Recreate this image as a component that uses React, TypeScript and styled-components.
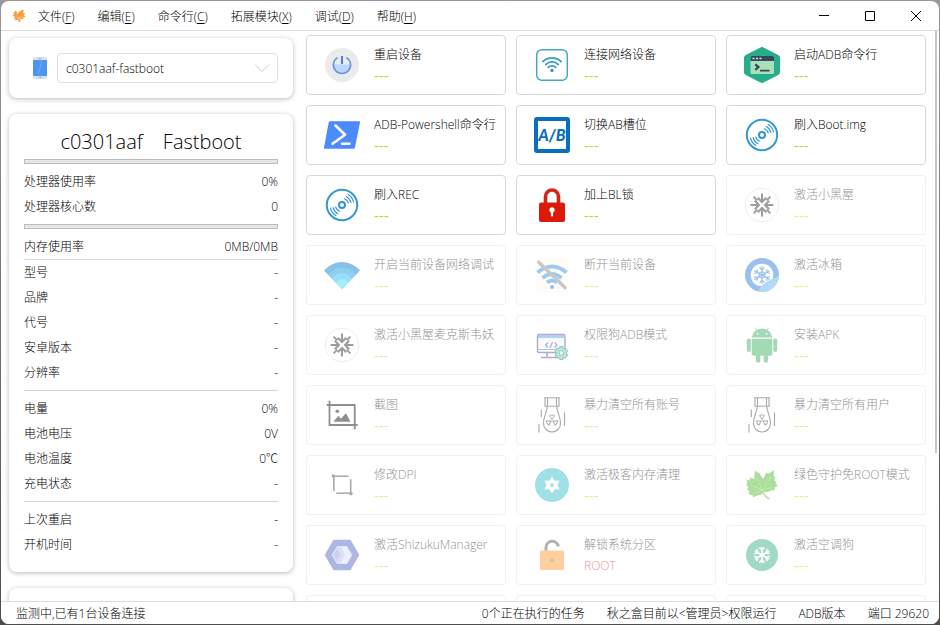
import React from "react";
import styled, { createGlobalStyle, css } from "styled-components";

const GlobalStyle = createGlobalStyle`
  * { box-sizing: border-box; }
  html, body { margin: 0; height: 100%; }
  body {
    font-family: "Open Sans", "Noto Sans CJK SC", sans-serif;
    font-size: 12px;
    font-weight: 300;
    color: #000;
    background: linear-gradient(#98989c, #4c4c52);
  }
  button, select { font: inherit; color: inherit; }
`;

const Window = styled.div`
  display: flex;
  flex-direction: column;
  height: 100vh;
  border: 1px solid transparent;
  border-radius: 9px;
  background: #fff padding-box;
  overflow: hidden;
`;

const TitleBar = styled.header`
  display: flex;
  flex: none;
  align-items: center;
  justify-content: space-between;
  height: 30px;
  padding-left: 10px;
  border-bottom: 1px solid #dadbde;
`;

const MenuBar = styled.nav`
  display: flex;
  align-items: center;
  gap: 1px;

  > svg { margin-right: -1px; }
`;

const MenuItem = styled.button`
  height: 29px;
  padding: 0 11px;
  border: 0;
  background: none;
  white-space: nowrap;

  u { text-underline-offset: 2px; }
`;

const WindowControls = styled.div`
  display: flex;
`;

const WindowButton = styled.button`
  display: grid;
  place-items: center;
  width: 46px;
  height: 29px;
  padding: 0;
  border: 0;
  background: none;
`;

const Main = styled.main`
  display: grid;
  grid-template-columns: 284px minmax(0, 1fr) 3px;
  flex: 1;
  min-height: 0;
  padding: 0 1px 0 8px;
`;

const Sidebar = styled.aside`
  display: flex;
  flex-direction: column;
  gap: 16px;
  padding-top: 7px;
  min-height: 0;
`;

const Card = styled.section`
  flex: none;
  padding: 15px;
  border-radius: 8px;
  background: #fff;
  box-shadow: 0 1px 5px rgba(0, 0, 0, 0.28);
`;

const DevicePicker = styled(Card)`
  display: flex;
  align-items: center;
  gap: 9px;
  padding-left: 23px;
`;

const SelectBox = styled.div`
  display: grid;
  flex: 1;
  align-items: center;

  > * { grid-area: 1 / 1; }
  > svg { justify-self: end; margin-right: 8px; pointer-events: none; }
`;

const DeviceSelect = styled.select`
  width: 100%;
  height: 30px;
  padding: 0 8px;
  border: 1px solid #dcdfe3;
  border-radius: 4px;
  background: #fff;
  appearance: none;
`;

const DeviceTitle = styled.h1`
  display: flex;
  justify-content: center;
  gap: 20px;
  margin: 0 0 5px;
  font-size: 20px;
  line-height: 25px;
  font-weight: 300;
`;

const Meter = styled.div`
  height: 5px;
  border: 1px solid #bcbcbc;
  background: #e6e6e6;
`;

const Stats = styled.dl<{ $flushTop?: boolean; $flushBottom?: boolean }>`
  margin: 0;
  padding-top: ${(p) => (p.$flushTop ? 0 : 5)}px;
  padding-bottom: ${(p) => (p.$flushBottom ? 0 : 5)}px;
`;

const Rule = styled.hr`
  height: 1px;
  margin: 0;
  border: 0;
  background: #d6d6d6;
`;

const Stat = styled.div`
  display: flex;
  justify-content: space-between;
  line-height: 25px;

  dt, dd { margin: 0; }
`;

const Actions = styled.div`
  display: grid;
  grid-template-columns: repeat(auto-fill, minmax(190px, 1fr));
  grid-auto-rows: 60px;
  gap: 10px;
  min-height: 0;
  padding: 4px 9px 0 13px;
  overflow: hidden;
`;

const TileText = styled.span`
  display: flex;
  flex-direction: column;
  line-height: 21px;
`;

const Tile = styled.button`
  display: flex;
  align-items: center;
  gap: 14px;
  min-width: 0;
  padding: 0 0 0 17px;
  border: 1px solid #d5d8da;
  border-radius: 4px;
  background: #fff;
  text-align: left;
  white-space: nowrap;

  > svg { flex: none; }

  &:disabled {
    color: #000;
    border-color: #f0f1f1;
  }
  &:disabled > svg { opacity: 0.5; }
  &:disabled > ${TileText} { opacity: 0.45; }
`;

const Note = styled.span<{ $alert?: boolean }>`
  ${(p) =>
    p.$alert
      ? css`color: #e00018;`
      : css`color: #a4e428; font-size: 15px; font-weight: 400;`}
`;

const ScrollTrack = styled.div`
  min-height: 0;
`;

const ScrollThumb = styled.div`
  width: 2px;
  height: 74%;
  background: #c4c6c8;
`;

const StatusBar = styled.footer`
  display: flex;
  flex: none;
  justify-content: space-between;
  height: 23px;
  padding: 0 10px 0 15px;
  border-top: 1px solid #dadbde;
  background: #fff;
  line-height: 23px;
  white-space: nowrap;
`;

const StatusGroup = styled.div`
  display: flex;
  gap: 22px;
`;

const Icon = ({ children }: { children: React.ReactNode }) => (
  <svg width="36" height="36" viewBox="0 0 36 36" fill="none" aria-hidden="true">
    {children}
  </svg>
);

const Logo = () => (
  <svg width="16" height="16" viewBox="0 0 16 16" aria-hidden="true">
    <path
      d="M3.500 2.500 5.600 3.600 6.800 6.600 8.200 3 9.200 3.800 11 2 12.600 1.800 12 5 14.200 5.200 12.600 7.600 14.600 8.600 12 9.800 12.400 11 9.200 10.800 9.600 13.400 8 14.600 7.400 11.400 4 12.600 4.600 10.800 2.400 10.400 4 9 1.400 7.400 3.400 6.800 1.800 4 4.200 4.800Z"
      fill="#f8983a"
    />
    <path d="m5 5.500 3 5 3.500-5M4.500 9.200l3.500 1.300 4-1.700" stroke="#fcc489" strokeWidth="0.700" fill="none" />
  </svg>
);

const PhoneIcon = () => (
  <svg width="16" height="24" viewBox="0 0 16 24" aria-hidden="true">
    <rect x="1" y="1" width="14" height="22" rx="1" fill="#d9e5f3" />
    <rect x="1" y="4" width="14" height="16" fill="#4f94ef" />
    <path d="M9.500 5 5.500 18h1L10.500 5Z" fill="#76acf4" />
    <path d="M6 2.500h4M6 21.500h4" stroke="#9bb8dc" />
  </svg>
);

const PowerIcon = () => (
  <Icon>
    <circle cx="18" cy="18" r="17" fill="#ebebec" />
    <path d="M9.500 17.500a8.500 8.500 0 0 0 17 0Z" fill="#bbd6fc" />
    <path d="M13.500 10.600a8.600 8.600 0 1 0 9 0" stroke="#6694e2" strokeWidth="1.600" />
    <path d="M18 9v8" stroke="#4d80d8" strokeWidth="2" />
  </Icon>
);

const WifiBoxIcon = () => (
  <Icon>
    <rect x="2.700" y="2.700" width="30.600" height="30.600" rx="5" stroke="#48a4c8" strokeWidth="1.500" />
    <g stroke="#359cc4" strokeWidth="1.700" strokeLinecap="round">
      <path d="M8.800 14.600a13 13 0 0 1 18.400 0" />
      <path d="M11.600 17.600a9 9 0 0 1 12.800 0" />
      <path d="M14.300 20.400a5.300 5.300 0 0 1 7.400 0" />
    </g>
    <circle cx="18" cy="23.500" r="1.700" fill="#359cc4" />
  </Icon>
);

const TerminalIcon = () => (
  <Icon>
    <path d="M16.500.500q1.500-.8 3 0L34.300 8Q36 9 36 10.800V25.200Q36 27 34.300 28L19.500 35.500q-1.500.8-3 0L1.700 28Q0 27 0 25.200V10.800Q0 9 1.700 8Z" fill="#25ad8c" />
    <rect x="6.500" y="9" width="23.500" height="18" rx="1.500" fill="#a9e0ba" />
    <path d="M6.500 14v-3.500Q6.500 9 8 9h20.500Q30 9 30 10.500V14Z" fill="#37475c" />
    <path d="M8.500 11.500h2M12 11.500h2M15.500 11.500h2" stroke="#d7e8e6" strokeWidth="1.500" />
    <path d="m11.300 17.300 3.200 2.800-3.200 2.800" stroke="#37475c" strokeWidth="2.200" />
    <path d="M16 23.700h9.500" stroke="#37475c" strokeWidth="1.800" />
  </Icon>
);

const PowershellIcon = () => (
  <Icon>
    <path d="M6 4.300H35q1.300 0 1 1.300L31 30.500q-.3 1.300-1.500 1.300H1q-1.300 0-1-1.300L4.700 5.600Q5 4.300 6 4.300Z" fill="#4b8bfd" />
    <path d="M11.500 8.500 21 17.800 8.500 26.800" stroke="#fff" strokeWidth="2.600" strokeLinecap="round" strokeLinejoin="round" />
    <path d="M18 26.700h7.500" stroke="#fff" strokeWidth="2.400" strokeLinecap="round" />
  </Icon>
);

const SlotIcon = () => (
  <Icon>
    <rect x="2" y="2" width="32" height="32" rx="1" fill="#fff" stroke="#0b6fc0" strokeWidth="4" />
    <text x="18" y="23.500" textAnchor="middle" fontFamily="Lato" fontSize="16" fontWeight="900" fontStyle="italic" fill="#0b6fc0">
      A/B
    </text>
  </Icon>
);

const DiscIcon = () => (
  <Icon>
    <circle cx="18" cy="18" r="15.200" stroke="#3698d3" strokeWidth="2" />
    <circle cx="18" cy="18" r="3" stroke="#2f94d0" strokeWidth="2" />
    <g stroke="#3698d3" strokeWidth="1.200" strokeLinecap="round">
      <path d="M20.500 11.800a6.700 6.700 0 0 1 3.800 4" />
      <path d="M22.300 9.400a9.500 9.500 0 0 1 4.600 6" />
      <path d="M24.200 7.500a12 12 0 0 1 5.300 7.300" />
      <path d="M15.500 24.200a6.700 6.700 0 0 1-3.800-4" />
      <path d="M13.700 26.600a9.500 9.500 0 0 1-4.600-6" />
      <path d="M11.800 28.500a12 12 0 0 1-5.300-7.300" />
    </g>
  </Icon>
);

const LockIcon = () => (
  <Icon>
    <path d="M11.500 17V9.500a6.500 6.500 0 0 1 13 0V17" stroke="#d32417" strokeWidth="3.600" />
    <rect x="5" y="15.500" width="26" height="19.500" rx="2" fill="#dc1a09" />
    <circle cx="18" cy="22.800" r="2.600" fill="#fff" />
    <path d="M18 23v5.500" stroke="#fff" strokeWidth="2.200" strokeLinecap="round" />
  </Icon>
);

const InwardIcon = () => (
  <Icon>
    <circle cx="18" cy="18" r="16.700" stroke="#dedede" strokeWidth="1" />
    <g stroke="#3c3c3c" strokeWidth="2">
      {[0, 90, 180, 270].map((a) => (
        <g key={a} transform={`rotate(${a} 18 18)`}>
          <path d="M18 6.500v8M13.800 10.800l4.200 4.200 4.200-4.200" />
          <path d="m9.600 9.600 3.800 3.800" />
        </g>
      ))}
    </g>
  </Icon>
);

const FanIcon = () => (
  <Icon>
    <path d="M0 13.500Q8 5 18 5t18 8.500L18 31.700Z" fill="#1283d4" />
    <path d="M4 17.500Q10 10.500 18 10.500t14 7L18 31.700Z" fill="#20a0e4" />
    <path d="M8 21.500Q12.500 16 18 16t10 5.500L18 31.700Z" fill="#2fc0f2" />
    <path d="M12 25.600Q15 22 18 22t6 3.600l-6 6.100Z" fill="#48e0fc" />
  </Icon>
);

const WifiOffIcon = () => (
  <Icon>
    <rect x="2" y="1" width="32" height="34" fill="#fffaf3" />
    <g stroke="#3f97de" strokeWidth="4">
      <path d="M3.500 15.500Q18 3.500 32.500 15.500" />
      <path d="M8.500 21q9.500-8 19 0" />
      <path d="M13 25.500q5-4 10 0" />
    </g>
    <circle cx="18" cy="30" r="2" fill="#3578cc" />
    <path d="M5 5.500 31 30.500" stroke="#8e9298" strokeWidth="3.600" strokeLinecap="round" />
  </Icon>
);

const FridgeIcon = () => (
  <Icon>
    <circle cx="18" cy="18" r="17" fill="#3584d8" />
    <circle cx="18" cy="18" r="11.300" fill="#fff" />
    <path d="M14 34.500Q17 27 26 23q7-3 8.800-5A17 17 0 0 1 14 34.500Z" fill="#66b6f4" />
    <g stroke="#3b87d6" strokeWidth="1.200">
      {[0, 60, 120, 180, 240, 300].map((a) => (
        <path key={a} d="M18 18V9M15.500 10.500 18 13l2.500-2.500" transform={`rotate(${a} 18 18)`} />
      ))}
      <circle cx="18" cy="18" r="3" />
    </g>
  </Icon>
);

const MonitorIcon = () => (
  <Icon>
    <rect x="3.500" y="7.500" width="27.500" height="18" rx="1.500" fill="#f5f7ff" stroke="#56609c" strokeWidth="1.400" />
    <path d="M4 8h26.500v3H4Z" fill="#64a4e8" />
    <path d="M4 22.500h26" stroke="#7a85bc" />
    <path d="m14 15.500-2.500 2.500 2.500 2.500M20.500 15.500 23 18l-2.500 2.500M18.500 15l-2.500 6" stroke="#56609c" strokeWidth="1.200" />
    <path d="M13 26v3.500M22 26v3.500M7 30.500h20" stroke="#56609c" strokeWidth="1.600" />
    <path d="m25.800 19.500 3 0 .8 2 2.200-.3 1.800 2.800-1.300 2 1.300 2-1.800 2.800-2.200-.3-.8 2h-3l-.8-2-2.200.3-1.800-2.800 1.300-2-1.300-2 1.800-2.800 2.200.3Z" fill="#6ed0b6" stroke="#348878" />
    <circle cx="27.300" cy="26" r="2.300" fill="#fff" stroke="#348878" />
  </Icon>
);

const AndroidIcon = () => (
  <Icon>
    <g fill="#4ab66d">
      <path d="M8 10.500a10 9 0 0 1 20 0Z" />
      <path d="M7.700 11.700h20.600v15a2 2 0 0 1-2 2H9.700a2 2 0 0 1-2-2Z" />
      <rect x="2.800" y="11.500" width="4" height="13.500" rx="2" />
      <rect x="29.200" y="11.500" width="4" height="13.500" rx="2" />
      <rect x="12" y="26" width="4.300" height="9.700" rx="2" />
      <rect x="19.700" y="26" width="4.300" height="9.700" rx="2" />
    </g>
    <path d="m13 3.500-1.500-2.800M23 3.500l1.500-2.800" stroke="#4ab66d" strokeWidth="0.800" />
    <circle cx="13.500" cy="6.700" r="0.900" fill="#fff" />
    <circle cx="22.500" cy="6.700" r="0.900" fill="#fff" />
  </Icon>
);

const ScreenshotIcon = () => (
  <Icon>
    <path d="M2.700 8H30.700V32.300M5.500 3.700V28H33.700" stroke="#222" strokeWidth="1.800" />
    <circle cx="13.300" cy="14.200" r="1.800" fill="#222" />
    <path d="m9.500 24.700 4.800-6 2.600 3 5.100-5.400 4.500 8.400Z" fill="#222" />
  </Icon>
);

const BombIcon = () => (
  <Icon>
    <g stroke="#555" strokeWidth="1.100">
      <path d="M10 .700h16M11 .700v8.600h14V.700M13.500 1v8M22.500 1v8" />
      <path d="M13.300 9.500C13 15 9.500 19 9.500 26.500a8.300 8.300 0 0 0 17 0C26.500 19 23 15 22.700 9.500" />
      <path d="M5 27v8.500M7.300 12.500V20M30.500 15.500V29" />
      {[0, 120, 240].map((a) => (
        <path key={a} d="M18 22.500 15.600 18.500a4.600 4.600 0 0 1 4.800 0Z" strokeWidth="0.900" transform={`rotate(${a} 18 23.500)`} />
      ))}
    </g>
  </Icon>
);

const CropIcon = () => (
  <Icon>
    <path d="M9.800 8v16M9.800 9.200h14.700M26.700 12.300V28M12.300 26.300h15" stroke="#555" strokeWidth="1.600" />
    <circle cx="9.300" cy="9" r="1.800" fill="#555" />
    <circle cx="26.900" cy="26.600" r="1.800" fill="#555" />
  </Icon>
);

const StarIcon = () => (
  <Icon>
    <circle cx="18" cy="18" r="17" fill="#44c4d0" />
    <path d="m18 9.500 2.600 4.200 5-.1-2.400 4.400 2.400 4.400-5-.1L18 26.500l-2.600-4.200-5 .1 2.400-4.400-2.400-4.400 5 .1Z" fill="#fff" />
    <circle cx="18" cy="18" r="1.900" fill="#44c4d0" />
  </Icon>
);

const LeafIcon = () => (
  <Icon>
    <path
      d="M11 3.500 13 5.500 15 5.500 17 9 19.300 12 22 6 25 6.500 30 3 29.700 8.500 31.200 10.500 30 13.500 32.500 14.500 31.500 16.500 34 18.500 30.500 20.500 31 23 27 23.500 24 25 19.500 25 17 28 13 28.500 9.500 30.500 9 28.500 4.500 27 5.500 24.500 3 22.500 4.500 20.500 2 17.500 3.500 16 2 12.500 5.500 13.500 6 10.500 10 12Z"
      fill="#5cc13f"
    />
    <path d="M18.500 23 12 10M18.500 23 27 10M18.500 23 6 18M18.500 23l10-3M18.500 23 10 27" stroke="#a9dd6c" strokeWidth="0.600" />
    <path d="M18.500 23q1.500 6.500 7 9" stroke="#8fb552" strokeWidth="1.500" />
  </Icon>
);

const ShizukuIcon = () => (
  <Icon>
    <path d="M9.500 2.800h17L35.300 18l-8.800 15.200h-17L.700 18Z" fill="#6270c6" />
    <path d="M13 9h10l5.500 9L23 27H13l-5.500-9Z" fill="#bcc5ee" />
    <path d="M13 11.500 17 18l-4 6.500L9.500 18Z" fill="#99a5e0" />
    <path d="M17 9.500h5.500l5 8.500-5 8.500H17l4-8.500Z" fill="#dfe4fa" />
  </Icon>
);

const UnlockIcon = () => (
  <Icon>
    <path d="M12 14V10a6.200 6.200 0 0 1 12.300-.5" stroke="#666" strokeWidth="3" />
    <rect x="6" y="13.500" width="24" height="19.500" rx="1.500" fill="#ffa042" />
    <circle cx="18" cy="23.200" r="2" fill="#b98749" />
  </Icon>
);

const SnowIcon = () => (
  <Icon>
    <circle cx="18" cy="18" r="16" fill="#48b48a" />
    <g stroke="#fff" strokeWidth="1.600" strokeLinecap="round">
      {[0, 60, 120, 180, 240, 300].map((a) => (
        <path key={a} d="M18 18v-7.700M15.800 11l2.200 2.200 2.200-2.200" transform={`rotate(${a} 18 18)`} />
      ))}
    </g>
  </Icon>
);

type Action = { name: string; icon: () => React.ReactElement; off?: boolean; root?: boolean };

const actions: Action[] = [
  { name: "重启设备", icon: PowerIcon },
  { name: "连接网络设备", icon: WifiBoxIcon },
  { name: "启动ADB命令行", icon: TerminalIcon },
  { name: "ADB-Powershell命令行", icon: PowershellIcon },
  { name: "切换AB槽位", icon: SlotIcon },
  { name: "刷入Boot.img", icon: DiscIcon },
  { name: "刷入REC", icon: DiscIcon },
  { name: "加上BL锁", icon: LockIcon },
  { name: "激活小黑屋", icon: InwardIcon, off: true },
  { name: "开启当前设备网络调试", icon: FanIcon, off: true },
  { name: "断开当前设备", icon: WifiOffIcon, off: true },
  { name: "激活冰箱", icon: FridgeIcon, off: true },
  { name: "激活小黑屋麦克斯韦妖", icon: InwardIcon, off: true },
  { name: "权限狗ADB模式", icon: MonitorIcon, off: true },
  { name: "安装APK", icon: AndroidIcon, off: true },
  { name: "截图", icon: ScreenshotIcon, off: true },
  { name: "暴力清空所有账号", icon: BombIcon, off: true },
  { name: "暴力清空所有用户", icon: BombIcon, off: true },
  { name: "修改DPI", icon: CropIcon, off: true },
  { name: "激活极客内存清理", icon: StarIcon, off: true },
  { name: "绿色守护免ROOT模式", icon: LeafIcon, off: true },
  { name: "激活ShizukuManager", icon: ShizukuIcon, off: true },
  { name: "解锁系统分区", icon: UnlockIcon, off: true, root: true },
  { name: "激活空调狗", icon: SnowIcon, off: true },
];

const menus = [
  ["文件", "F"],
  ["编辑", "E"],
  ["命令行", "C"],
  ["拓展模块", "X"],
  ["调试", "D"],
  ["帮助", "H"],
];

type StatRowsProps = { rows: string[][]; flushTop?: boolean; flushBottom?: boolean };

const StatRows = ({ rows, flushTop, flushBottom }: StatRowsProps) => (
  <Stats $flushTop={flushTop} $flushBottom={flushBottom}>
    {rows.map(([label, value]) => (
      <Stat key={label}>
        <dt>{label}</dt>
        <dd>{value}</dd>
      </Stat>
    ))}
  </Stats>
);

export default function App() {
  return (
    <>
      <GlobalStyle />
      <Window>
        <TitleBar>
          <MenuBar>
            <Logo />
            {menus.map(([label, key]) => (
              <MenuItem key={key} type="button">
                {label}(<u>{key}</u>)
              </MenuItem>
            ))}
          </MenuBar>
          <WindowControls>
            <WindowButton type="button" aria-label="最小化">
              <svg width="12" height="12" viewBox="0 0 12 12"><path d="M1 5.500h10" stroke="#000" /></svg>
            </WindowButton>
            <WindowButton type="button" aria-label="最大化">
              <svg width="12" height="12" viewBox="0 0 12 12"><path d="M1.500 1.500h9v9h-9Z" stroke="#000" fill="none" /></svg>
            </WindowButton>
            <WindowButton type="button" aria-label="关闭">
              <svg width="12" height="12" viewBox="0 0 12 12"><path d="m1 1 10 10M11 1 1 11" stroke="#000" /></svg>
            </WindowButton>
          </WindowControls>
        </TitleBar>
        <Main>
          <Sidebar>
            <DevicePicker>
              <PhoneIcon />
              <SelectBox>
                <DeviceSelect aria-label="设备" defaultValue="c0301aaf-fastboot">
                  <option>c0301aaf-fastboot</option>
                </DeviceSelect>
                <svg width="16" height="10" viewBox="0 0 16 10" aria-hidden="true">
                  <path d="m1 1.500 7 7 7-7" stroke="#c8cbce" fill="none" />
                </svg>
              </SelectBox>
            </DevicePicker>
            <Card>
              <DeviceTitle>
                <span>c0301aaf</span>
                <span>Fastboot</span>
              </DeviceTitle>
              <Meter role="progressbar" aria-label="处理器使用率" aria-valuenow={0} />
              <StatRows rows={[["处理器使用率", "0%"], ["处理器核心数", "0"]]} />
              <Meter role="progressbar" aria-label="内存使用率" aria-valuenow={0} />
              <StatRows flushBottom rows={[["内存使用率", "0MB/0MB"]]} />
              <Rule />
              <StatRows flushTop rows={[["型号", "-"], ["品牌", "-"], ["代号", "-"], ["安卓版本", "-"], ["分辨率", "-"]]} />
              <Rule />
              <StatRows rows={[["电量", "0%"], ["电池电压", "0V"], ["电池温度", "0℃"], ["充电状态", "-"]]} />
              <Rule />
              <StatRows flushBottom rows={[["上次重启", "-"], ["开机时间", "-"]]} />
            </Card>
            <Card />
          </Sidebar>
          <Actions>
            {actions.map(({ name, icon: Glyph, off, root }) => (
              <Tile key={name} type="button" disabled={off}>
                <Glyph />
                <TileText>
                  <span>{name}</span>
                  <Note $alert={root}>{root ? "ROOT" : "---"}</Note>
                </TileText>
              </Tile>
            ))}
            <Tile type="button" disabled />
            <Tile type="button" disabled />
            <Tile type="button" disabled />
          </Actions>
          <ScrollTrack>
            <ScrollThumb />
          </ScrollTrack>
        </Main>
        <StatusBar>
          <span>监测中,已有1台设备连接</span>
          <StatusGroup>
            <span>0个正在执行的任务</span>
            <span>秋之盒目前以&lt;管理员&gt;权限运行</span>
            <span>ADB版本</span>
            <span>端口 29620</span>
          </StatusGroup>
        </StatusBar>
      </Window>
    </>
  );
}
